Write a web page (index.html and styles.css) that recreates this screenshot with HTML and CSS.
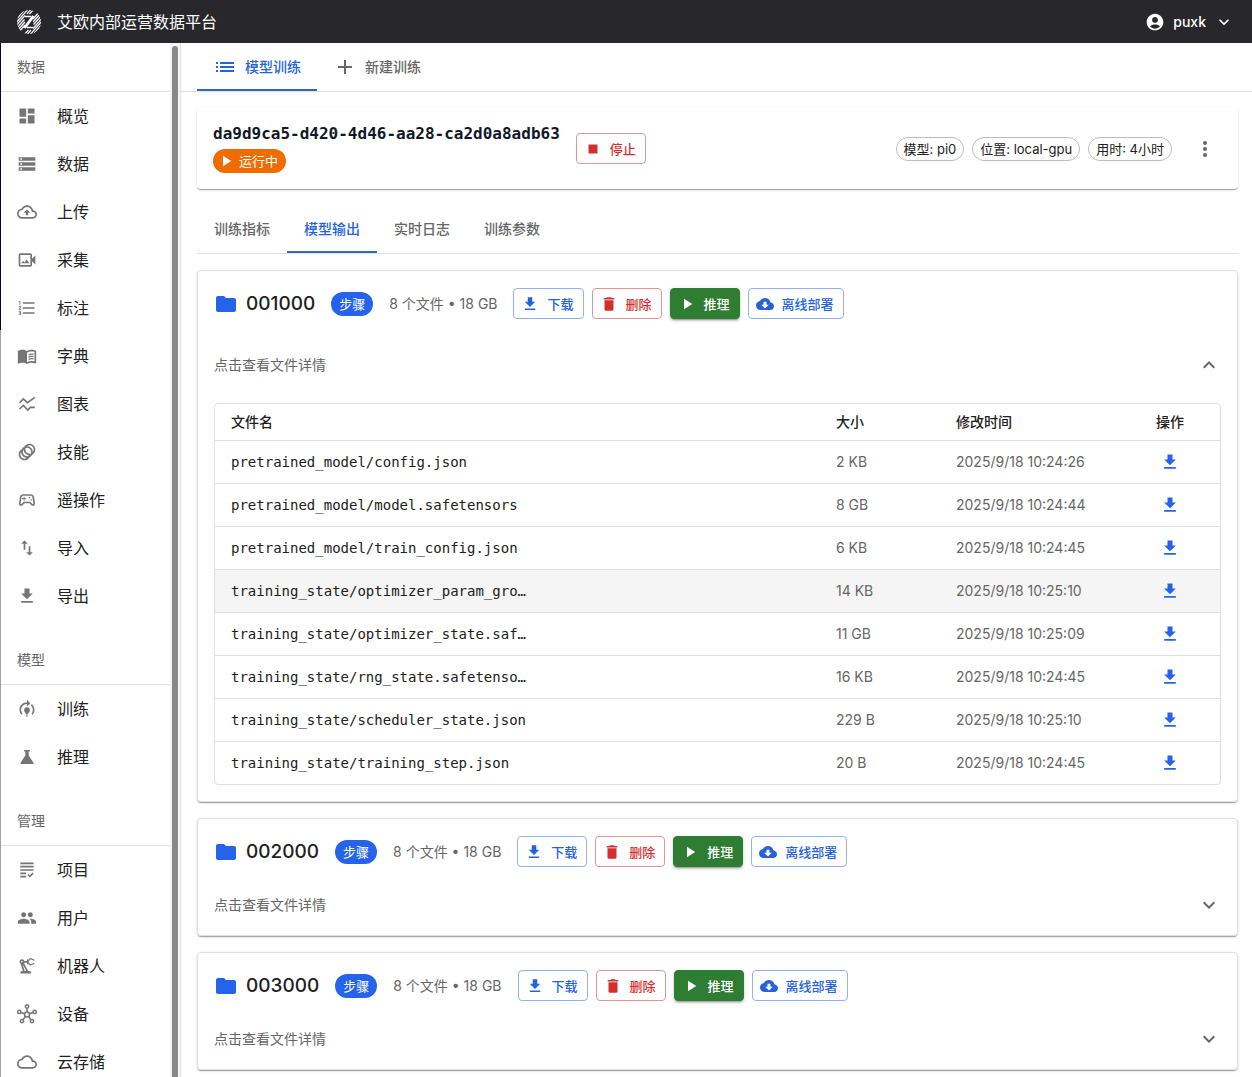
FILE: index.html
```html
<!DOCTYPE html>
<html lang="zh-CN">
  <head>
    <meta charset="UTF-8" />
    <meta name="viewport" content="width=device-width, initial-scale=1.0" />
    <title>艾欧内部运营数据平台</title>
    <link rel="stylesheet" href="styles.css">
  </head>
  <body>
    <svg class="sprite" aria-hidden="true">
      <symbol id="dashboard" viewBox="0 0 24 24"><path d="M3 13h8V3H3v10zm0 8h8v-6H3v6zm10 0h8V11h-8v10zm0-18v6h8V3h-8z" /></symbol>
      <symbol id="storage" viewBox="0 0 24 24"><path d="M2 20h20v-4H2v4zm2-3h2v2H4v-2zM2 4v4h20V4H2zm4 3H4V5h2v2zm-4 7h20v-4H2v4zm2-3h2v2H4v-2z" /></symbol>
      <symbol id="cloud" viewBox="0 0 24 24"><path d="M19.35 10.04C18.67 6.59 15.64 4 12 4 9.11 4 6.6 5.64 5.35 8.04 2.34 8.36 0 10.91 0 14c0 3.31 2.69 6 6 6h13c2.76 0 5-2.24 5-5 0-2.64-2.05-4.78-4.65-4.96zM19 18H6c-2.21 0-4-1.79-4-4 0-2.05 1.53-3.76 3.56-3.97l1.07-.11.5-.95C8.08 7.14 9.94 6 12 6c2.62 0 4.88 1.86 5.39 4.43l.3 1.5 1.53.11c1.56.1 2.78 1.41 2.78 2.96 0 1.65-1.35 3-3 3z" /></symbol>
      <symbol id="upload" viewBox="0 0 24 24"><path d="M19.35 10.04C18.67 6.59 15.64 4 12 4 9.11 4 6.6 5.64 5.35 8.04 2.34 8.36 0 10.91 0 14c0 3.31 2.69 6 6 6h13c2.76 0 5-2.24 5-5 0-2.64-2.05-4.78-4.65-4.96zM19 18H6c-2.21 0-4-1.79-4-4 0-2.05 1.53-3.76 3.56-3.97l1.07-.11.5-.95C8.08 7.14 9.94 6 12 6c2.62 0 4.88 1.86 5.39 4.43l.3 1.5 1.53.11c1.56.1 2.78 1.41 2.78 2.96 0 1.65-1.35 3-3 3zM8 13h2.55v3h2.9v-3H16l-4-4z" /></symbol>
      <symbol id="video" viewBox="0 0 24 24"><path d="M18 10.48V6c0-1.1-.9-2-2-2H4c-1.1 0-2 .9-2 2v12c0 1.1.9 2 2 2h12c1.1 0 2-.9 2-2v-4.48l4 3.98v-11l-4 3.98zM16 18H4V6h12v12zM11.6 11.5 9 15l-1.6-2.2L5 16h10z" /></symbol>
      <symbol id="numbered" viewBox="0 0 24 24"><path d="M2 17h2v.5H3v1h1v.5H2v1h3v-4H2v1zm1-9h1V4H2v1h1v3zm-1 3h1.8L2 13.1v.9h3v-1H3.2L5 10.9V10H2v1zm5-6v2h14V5H7zm0 14h14v-2H7v2zm0-6h14v-2H7v2z" /></symbol>
      <symbol id="book" viewBox="0 0 24 24"><path d="M21 5c-1.11-.35-2.33-.5-3.5-.5-1.95 0-4.05.4-5.5 1.5-1.45-1.1-3.55-1.5-5.5-1.5S2.45 4.9 1 6v14.65c0 .25.25.5.5.5.1 0 .15-.05.25-.05C3.1 20.45 5.05 20 6.5 20c1.95 0 4.05.4 5.5 1.5 1.35-.85 3.8-1.5 5.5-1.5 1.65 0 3.35.3 4.75 1.05.1.05.15.05.25.05.25 0 .5-.25.5-.5V6c-.6-.45-1.25-.75-2-1zm0 13.5c-1.1-.35-2.3-.5-3.5-.5-1.7 0-4.15.65-5.5 1.5V8c1.35-.85 3.8-1.5 5.5-1.5 1.2 0 2.4.15 3.5.5v11.5z" /><path fill="none" stroke="currentColor" stroke-width="1.5" d="M13.9 10.6c1.7-.8 3.9-1 6.1-.5M13.9 13.3c1.7-.8 3.9-1 6.1-.5M13.9 16c1.7-.8 3.9-1 6.1-.5" /></symbol>
      <symbol id="chart" viewBox="0 0 24 24"><path fill="none" stroke="currentColor" stroke-width="2" d="M3 10.6 7.6 6l5 4.4L21.4 4M3 18l4.6-4.400 5.400 5.600 3-3.200h5.400" /></symbol>
      <symbol id="rings" viewBox="0 0 24 24"><path d="M15 2c-2.71 0-5.05 1.54-6.22 3.78-1.28.67-2.34 1.72-3 3C3.54 9.95 2 12.29 2 15c0 3.87 3.13 7 7 7 2.71 0 5.05-1.54 6.22-3.78 1.28-.67 2.34-1.72 3-3C20.46 14.05 22 11.71 22 9c0-3.87-3.13-7-7-7zM9 20c-2.76 0-5-2.24-5-5 0-1.12.37-2.16 1-3 0 3.87 3.13 7 7 7-.84.63-1.88 1-3 1zm3-3c-2.76 0-5-2.24-5-5 0-1.12.37-2.16 1-3 0 3.86 3.13 6.99 7 7-.84.63-1.88 1-3 1zm4.7-3.3c-.53.19-1.1.3-1.7.3-2.76 0-5-2.24-5-5 0-.6.11-1.17.3-1.7.53-.19 1.1-.3 1.7-.3 2.76 0 5 2.24 5 5 0 .6-.11 1.17-.3 1.7zM19 12c0-3.86-3.13-6.99-7-7 .84-.63 1.87-1 3-1 2.76 0 5 2.24 5 5 0 1.12-.37 2.16-1 3z" /></symbol>
      <symbol id="gamepad" viewBox="0 0 24 24"><path d="M21.58 16.09l-1.09-7.66C20.21 6.46 18.52 5 16.53 5H7.47C5.48 5 3.79 6.46 3.51 8.43l-1.09 7.66C2.2 17.63 3.39 19 4.94 19c.68 0 1.32-.27 1.8-.75L9 16h6l2.25 2.25c.48.48 1.13.75 1.8.75 1.56 0 2.75-1.37 2.53-2.91zm-2.1.72c-.08.09-.21.19-.42.19-.15 0-.29-.06-.39-.16L15.83 14H8.17l-2.84 2.84c-.1.1-.24.16-.39.16-.21 0-.34-.1-.42-.19-.08-.09-.16-.23-.13-.44l1.09-7.66C5.63 7.74 6.48 7 7.47 7h9.06c.99 0 1.84.74 1.98 1.72l1.09 7.66c.03.2-.05.34-.12.43zM9 8H8v2H6v1h2v2h1v-2h2v-1H9z" /><circle cx="17" cy="12" r="1" /><circle cx="15" cy="9" r="1" /></symbol>
      <symbol id="swap" viewBox="0 0 24 24"><path d="M16 17.01V10h-2v7.01h-3L15 21l4-3.99h-3zM9 3L5 6.99h3V14h2V6.99h3L9 3z" /></symbol>
      <symbol id="download" viewBox="0 0 24 24"><path d="M5 20h14v-2H5v2zM19 9h-4V3H9v6H5l7 7 7-7z" /></symbol>
      <symbol id="training" viewBox="0 0 24 24"><path d="M15.5 13.5c0 2-2.5 3.5-2.5 5h-2c0-1.5-2.5-3-2.5-5 0-1.93 1.57-3.5 3.5-3.5s3.5 1.57 3.5 3.5zM13 19.5h-2V21h2v-1.5zM19 13c0 1.68-.59 3.21-1.58 4.42l1.42 1.42C20.18 17.27 21 15.23 21 13c0-2.74-1.23-5.19-3.16-6.84l-1.42 1.42C17.99 8.86 19 10.82 19 13zM16 5l-4-4v3c-4.97 0-9 4.03-9 9 0 2.23.82 4.27 2.16 5.84l1.42-1.42C5.59 16.21 5 14.68 5 13c0-3.86 3.14-7 7-7v3l4-4z" /></symbol>
      <symbol id="flask" viewBox="0 0 24 24"><path d="M8.5 3.5h7v2H14v4.8l5.6 8.2c.7 1.1 0 2-1.1 2h-13c-1.1 0-1.8-.9-1.1-2L10 10.3V5.5H8.5z" /></symbol>
      <symbol id="grading" viewBox="0 0 24 24"><path d="M4 7h16v2H4V7zm0 6h16v-2H4v2zm0 4h7v-2H4v2zm0 4h7v-2H4v2zm11.41-2.83L14 16.75l-1.41 1.41L15.41 21 20 16.42 18.58 15l-3.17 3.17zM4 3v2h16V3H4z" /></symbol>
      <symbol id="people" viewBox="0 0 24 24"><path d="M16 11c1.66 0 2.99-1.34 2.99-3S17.66 5 16 5c-1.66 0-3 1.34-3 3s1.34 3 3 3zm-8 0c1.66 0 2.99-1.34 2.99-3S9.66 5 8 5C6.34 5 5 6.34 5 8s1.34 3 3 3zm0 2c-2.33 0-7 1.17-7 3.5V19h14v-2.5c0-2.33-4.67-3.5-7-3.5zm8 0c-.29 0-.62.02-.97.05 1.16.84 1.97 1.97 1.97 3.45V19h6v-2.5c0-2.33-4.67-3.5-7-3.5z" /></symbol>
      <symbol id="robot" viewBox="0 0 24 24"><path d="M19.93 8.35l-3.6 1.68L14 7.7V6.3l2.33-2.33 3.6 1.68c.38.18.82.01 1-.36.18-.38.01-.82-.36-1l-3.92-1.83c-.38-.18-.83-.1-1.13.2L13.78 4.4c-.18-.24-.46-.4-.78-.4-.55 0-1 .45-1 1v1H8.82C8.4 4.84 7.3 4 6 4 4.34 4 3 5.34 3 7c0 1.1.6 2.05 1.48 2.58L7.08 18H6c-1.1 0-2 .9-2 2v1h13v-1c0-1.1-.9-2-2-2h-1.62L8.41 8.77c.17-.24.31-.49.41-.77H12v1c0 .55.45 1 1 1 .32 0 .6-.16.78-.4l1.74 1.74c.3.3.75.38 1.13.2l3.92-1.83c.38-.18.54-.62.36-1-.18-.37-.62-.54-1-.36zM6 8c-.55 0-1-.45-1-1s.45-1 1-1 1 .45 1 1-.45 1-1 1zm5.11 10H9.17l-2.46-8h.1l4.3 8z" /></symbol>
      <symbol id="hub" viewBox="0 0 24 24"><g fill="none" stroke="currentColor" stroke-width="1.8"><circle cx="12" cy="12.5" r="3" /><circle cx="12" cy="3" r="2" /><circle cx="2.8" cy="9.5" r="2" /><circle cx="21.2" cy="9.5" r="2" /><circle cx="6" cy="20.5" r="2" /><circle cx="18" cy="20.5" r="2" /><path d="M12 5v4.500M4.700 10.100l4.400 1.500M19.300 10.100l-4.400 1.500M7.300 18.900l2.900-3.900M16.700 18.900 13.800 15" /></g></symbol>
      <symbol id="list" viewBox="0 0 24 24"><path d="M3 13h2v-2H3v2zm0 4h2v-2H3v2zm0-8h2V7H3v2zm4 4h14v-2H7v2zm0 4h14v-2H7v2zM7 7v2h14V7H7z" /></symbol>
      <symbol id="add" viewBox="0 0 24 24"><path d="M19 13h-6v6h-2v-6H5v-2h6V5h2v6h6v2z" /></symbol>
      <symbol id="play" viewBox="0 0 24 24"><path d="M8 5v14l11-7z" /></symbol>
      <symbol id="stop" viewBox="0 0 24 24"><path d="M6 6h12v12H6z" /></symbol>
      <symbol id="delete" viewBox="0 0 24 24"><path d="M6 19c0 1.1.9 2 2 2h8c1.1 0 2-.9 2-2V7H6v12zM19 4h-3.5l-1-1h-5l-1 1H5v2h14V4z" /></symbol>
      <symbol id="deploy" viewBox="0 0 24 24"><path d="M19.35 10.04C18.67 6.59 15.64 4 12 4 9.11 4 6.6 5.64 5.35 8.04 2.34 8.36 0 10.91 0 14c0 3.31 2.69 6 6 6h13c2.76 0 5-2.24 5-5 0-2.64-2.05-4.78-4.65-4.96zM17 13l-5 5-5-5h3V9h4v4h3z" /></symbol>
      <symbol id="folder" viewBox="0 0 24 24"><path d="M10 4H4c-1.1 0-1.99.9-1.99 2L2 18c0 1.1.9 2 2 2h16c1.1 0 2-.9 2-2V8c0-1.1-.9-2-2-2h-8l-2-2z" /></symbol>
      <symbol id="more" viewBox="0 0 24 24"><circle cx="12" cy="6" r="2" /><circle cx="12" cy="12" r="2" /><circle cx="12" cy="18" r="2" /></symbol>
      <symbol id="expand" viewBox="0 0 24 24"><path d="M16.59 8.59 12 13.17 7.41 8.59 6 10l6 6 6-6z" /></symbol>
      <symbol id="collapse" viewBox="0 0 24 24"><path d="m12 8-6 6 1.41 1.41L12 10.83l4.59 4.58L18 14z" /></symbol>
      <symbol id="account" viewBox="0 0 24 24"><path d="M12 2C6.48 2 2 6.48 2 12s4.48 10 10 10 10-4.48 10-10S17.52 2 12 2zm0 4c1.93 0 3.5 1.57 3.5 3.5S13.93 13 12 13s-3.5-1.57-3.5-3.5S10.07 6 12 6zm0 14c-2.03 0-4.43-.82-6.14-2.88C7.55 15.8 9.68 15 12 15s4.45.8 6.14 2.12C16.43 19.18 14.03 20 12 20z" /></symbol>
    </svg>

    <header class="topbar">
      <svg class="logo" viewBox="0 0 24 24" aria-hidden="true">
        <clipPath id="disc"><circle cx="12" cy="12" r="12" /></clipPath>
        <g clip-path="url(#disc)" fill="none" stroke="#fff">
          <path stroke-width="1.2" d="M-2 8 8-4M-2 11 11-4M-2 14 13-3M-2 17 8 5.500M-1 19 7.500 9.500M0 21 8 12M1 23 8 15M10 4 16-3M12.500 4 19-3" />
          <path stroke-width="1.2" d="M26 16 16 28M26 13 13 28M26 10 11 27M26 7 16 18.500M25 5 16.500 14.500M24 3 16 12M23 1l-7 8M14 20 8 27M11.500 20 5 27" />
          <path stroke-width="2.800" d="M16.500 6 7.500 18" />
          <path stroke-width="1.600" d="M8 6.500h6M10 17.500h6" />
        </g>
      </svg>
      <h1 class="brand">艾欧内部运营数据平台</h1>
      <button class="user" type="button">
        <svg class="icon"><use href="#account" /></svg>
        <span>puxk</span>
        <svg class="icon"><use href="#expand" /></svg>
      </button>
    </header>

    <div class="layout">
      <nav class="sidebar">
        <h2 class="group-title">数据</h2>
        <ul class="group">
          <li><a class="nav-link" href="#"><svg class="icon"><use href="#dashboard" /></svg>概览</a></li>
          <li><a class="nav-link" href="#"><svg class="icon"><use href="#storage" /></svg>数据</a></li>
          <li><a class="nav-link" href="#"><svg class="icon"><use href="#upload" /></svg>上传</a></li>
          <li><a class="nav-link" href="#"><svg class="icon"><use href="#video" /></svg>采集</a></li>
          <li><a class="nav-link" href="#"><svg class="icon"><use href="#numbered" /></svg>标注</a></li>
          <li><a class="nav-link" href="#"><svg class="icon"><use href="#book" /></svg>字典</a></li>
          <li><a class="nav-link" href="#"><svg class="icon"><use href="#chart" /></svg>图表</a></li>
          <li><a class="nav-link" href="#"><svg class="icon"><use href="#rings" /></svg>技能</a></li>
          <li><a class="nav-link" href="#"><svg class="icon"><use href="#gamepad" /></svg>遥操作</a></li>
          <li><a class="nav-link" href="#"><svg class="icon"><use href="#swap" /></svg>导入</a></li>
          <li><a class="nav-link" href="#"><svg class="icon"><use href="#download" /></svg>导出</a></li>
        </ul>
        <h2 class="group-title">模型</h2>
        <ul class="group">
          <li><a class="nav-link" href="#"><svg class="icon"><use href="#training" /></svg>训练</a></li>
          <li><a class="nav-link" href="#"><svg class="icon"><use href="#flask" /></svg>推理</a></li>
        </ul>
        <h2 class="group-title">管理</h2>
        <ul class="group">
          <li><a class="nav-link" href="#"><svg class="icon"><use href="#grading" /></svg>项目</a></li>
          <li><a class="nav-link" href="#"><svg class="icon"><use href="#people" /></svg>用户</a></li>
          <li><a class="nav-link" href="#"><svg class="icon"><use href="#robot" /></svg>机器人</a></li>
          <li><a class="nav-link" href="#"><svg class="icon"><use href="#hub" /></svg>设备</a></li>
          <li><a class="nav-link" href="#"><svg class="icon"><use href="#cloud" /></svg>云存储</a></li>
        </ul>
      </nav>
      <div class="scrollbar"><div class="thumb"></div></div>

      <main class="main">
        <div class="tabs page-tabs" role="tablist">
          <button class="tab active" type="button" role="tab" aria-selected="true"><svg class="icon"><use href="#list" /></svg>模型训练</button>
          <button class="tab" type="button" role="tab"><svg class="icon"><use href="#add" /></svg>新建训练</button>
        </div>

        <div class="content">
          <section class="job">
            <div class="job-info">
              <h2 class="job-id">da9d9ca5-d420-4d46-aa28-ca2d0a8adb63</h2>
              <span class="chip running"><svg class="icon"><use href="#play" /></svg>运行中</span>
            </div>
            <button class="btn danger" type="button"><svg class="icon"><use href="#stop" /></svg>停止</button>
            <div class="job-meta">
              <span class="chip outlined">模型: pi0</span>
              <span class="chip outlined">位置: local-gpu</span>
              <span class="chip outlined">用时: 4小时</span>
            </div>
            <button class="icon-btn" type="button" aria-label="更多"><svg class="icon"><use href="#more" /></svg></button>
          </section>

          <div class="tabs detail-tabs" role="tablist">
            <button class="tab" type="button" role="tab">训练指标</button>
            <button class="tab active" type="button" role="tab" aria-selected="true">模型输出</button>
            <button class="tab" type="button" role="tab">实时日志</button>
            <button class="tab" type="button" role="tab">训练参数</button>
          </div>

          <section class="step">
            <div class="step-head">
              <h3 class="step-name"><svg class="icon"><use href="#folder" /></svg>001000</h3>
              <span class="chip primary">步骤</span>
              <span class="step-size">8 个文件 • 18 GB</span>
              <div class="actions">
                <button class="btn" type="button"><svg class="icon"><use href="#download" /></svg>下载</button>
                <button class="btn danger" type="button"><svg class="icon"><use href="#delete" /></svg>删除</button>
                <button class="btn success" type="button"><svg class="icon"><use href="#play" /></svg>推理</button>
                <button class="btn" type="button"><svg class="icon"><use href="#deploy" /></svg>离线部署</button>
              </div>
            </div>
            <button class="summary expanded" type="button" aria-expanded="true">点击查看文件详情<svg class="icon"><use href="#collapse" /></svg></button>
            <div class="table-wrap">
              <table class="files">
                <thead>
                  <tr><th>文件名</th><th class="col-size">大小</th><th class="col-time">修改时间</th><th class="col-action">操作</th></tr>
                </thead>
                <tbody>
                  <tr>
                    <td><div class="file-name">pretrained_model/config.json</div></td><td>2 KB</td><td>2025/9/18 10:24:26</td>
                    <td class="col-action"><button class="icon-btn small" type="button" aria-label="下载"><svg class="icon"><use href="#download" /></svg></button></td>
                  </tr>
                  <tr>
                    <td><div class="file-name">pretrained_model/model.safetensors</div></td><td>8 GB</td><td>2025/9/18 10:24:44</td>
                    <td class="col-action"><button class="icon-btn small" type="button" aria-label="下载"><svg class="icon"><use href="#download" /></svg></button></td>
                  </tr>
                  <tr>
                    <td><div class="file-name">pretrained_model/train_config.json</div></td><td>6 KB</td><td>2025/9/18 10:24:45</td>
                    <td class="col-action"><button class="icon-btn small" type="button" aria-label="下载"><svg class="icon"><use href="#download" /></svg></button></td>
                  </tr>
                  <tr class="hovered">
                    <td><div class="file-name">training_state/optimizer_param_groups.json</div></td><td>14 KB</td><td>2025/9/18 10:25:10</td>
                    <td class="col-action"><button class="icon-btn small" type="button" aria-label="下载"><svg class="icon"><use href="#download" /></svg></button></td>
                  </tr>
                  <tr>
                    <td><div class="file-name">training_state/optimizer_state.safetensors</div></td><td>11 GB</td><td>2025/9/18 10:25:09</td>
                    <td class="col-action"><button class="icon-btn small" type="button" aria-label="下载"><svg class="icon"><use href="#download" /></svg></button></td>
                  </tr>
                  <tr>
                    <td><div class="file-name">training_state/rng_state.safetensors</div></td><td>16 KB</td><td>2025/9/18 10:24:45</td>
                    <td class="col-action"><button class="icon-btn small" type="button" aria-label="下载"><svg class="icon"><use href="#download" /></svg></button></td>
                  </tr>
                  <tr>
                    <td><div class="file-name">training_state/scheduler_state.json</div></td><td>229 B</td><td>2025/9/18 10:25:10</td>
                    <td class="col-action"><button class="icon-btn small" type="button" aria-label="下载"><svg class="icon"><use href="#download" /></svg></button></td>
                  </tr>
                  <tr>
                    <td><div class="file-name">training_state/training_step.json</div></td><td>20 B</td><td>2025/9/18 10:24:45</td>
                    <td class="col-action"><button class="icon-btn small" type="button" aria-label="下载"><svg class="icon"><use href="#download" /></svg></button></td>
                  </tr>
                </tbody>
              </table>
            </div>
          </section>

          <section class="step">
            <div class="step-head">
              <h3 class="step-name"><svg class="icon"><use href="#folder" /></svg>002000</h3>
              <span class="chip primary">步骤</span>
              <span class="step-size">8 个文件 • 18 GB</span>
              <div class="actions">
                <button class="btn" type="button"><svg class="icon"><use href="#download" /></svg>下载</button>
                <button class="btn danger" type="button"><svg class="icon"><use href="#delete" /></svg>删除</button>
                <button class="btn success" type="button"><svg class="icon"><use href="#play" /></svg>推理</button>
                <button class="btn" type="button"><svg class="icon"><use href="#deploy" /></svg>离线部署</button>
              </div>
            </div>
            <button class="summary" type="button" aria-expanded="false">点击查看文件详情<svg class="icon"><use href="#expand" /></svg></button>
          </section>

          <section class="step">
            <div class="step-head">
              <h3 class="step-name"><svg class="icon"><use href="#folder" /></svg>003000</h3>
              <span class="chip primary">步骤</span>
              <span class="step-size">8 个文件 • 18 GB</span>
              <div class="actions">
                <button class="btn" type="button"><svg class="icon"><use href="#download" /></svg>下载</button>
                <button class="btn danger" type="button"><svg class="icon"><use href="#delete" /></svg>删除</button>
                <button class="btn success" type="button"><svg class="icon"><use href="#play" /></svg>推理</button>
                <button class="btn" type="button"><svg class="icon"><use href="#deploy" /></svg>离线部署</button>
              </div>
            </div>
            <button class="summary" type="button" aria-expanded="false">点击查看文件详情<svg class="icon"><use href="#expand" /></svg></button>
          </section>
        </div>
      </main>
    </div>
  </body>
</html>
```
FILE: styles.css
```css
* {
  box-sizing: border-box;
}

body {
  margin: 0;
  height: 100vh;
  display: flex;
  flex-direction: column;
  overflow: hidden;
  background: #fff;
  color: #212121;
  font-family: Inter, "Noto Sans CJK SC", sans-serif;
  font-size: 14px;
  line-height: 20px;
}

h1,
h2,
h3,
ul {
  margin: 0;
  padding: 0;
  list-style: none;
}

button {
  padding: 0;
  border: 0;
  background: none;
  color: inherit;
  font: inherit;
  cursor: pointer;
}

.sprite {
  display: none;
}

.icon {
  flex: none;
  width: 24px;
  height: 24px;
  fill: currentColor;
}

/* Top bar */
.topbar {
  flex: none;
  height: 43px;
  padding: 0 18px 0 17px;
  display: flex;
  align-items: center;
  background: #28282c;
  color: #fff;
}

.logo {
  width: 24px;
  height: 24px;
  margin-right: 16px;
}

.brand {
  flex: 1;
  font-size: 16px;
  font-weight: 400;
}

.user {
  display: flex;
  align-items: center;
  gap: 8px;
  font-weight: 500;
}

.user .icon {
  width: 20px;
  height: 20px;
}

.layout {
  flex: 1;
  min-height: 0;
  display: flex;
}

/* Sidebar */
.sidebar {
  flex: none;
  width: 170px;
  padding-left: 1px;
  overflow: hidden;
  background: linear-gradient(#0b0630 287px, #a0a0a0 287px) left / 1px 100% no-repeat;
}

.group-title {
  height: 49px;
  padding-left: 16px;
  border-bottom: 1px solid #e0e0e0;
  color: #666;
  font-size: 14px;
  font-weight: 400;
  line-height: 48px;
}

.group {
  margin-bottom: 16px;
}

.nav-link {
  height: 48px;
  padding-left: 16px;
  display: flex;
  align-items: center;
  gap: 20px;
  color: #212121;
  font-size: 16px;
  text-decoration: none;
}

.nav-link .icon {
  width: 20px;
  height: 20px;
  color: #757575;
}

.scrollbar {
  flex: none;
  width: 11px;
  padding: 3px 2px 0;
  display: flex;
  background: #f5f5f5;
  border-right: 1px solid #e0e0e0;
}

.thumb {
  width: 6px;
  border-radius: 3px 3px 0 0;
  background: #888;
}

/* Main area */
.main {
  flex: 1;
  min-width: 0;
  display: flex;
  flex-direction: column;
}

.tabs {
  flex: none;
  display: flex;
  height: 49px;
  border-bottom: 1px solid #e0e0e0;
}

.page-tabs {
  padding-left: 16px;
}

.tab {
  min-width: 90px;
  padding: 2px 16px 0;
  display: flex;
  align-items: center;
  justify-content: center;
  gap: 8px;
  border-bottom: 2px solid transparent;
  color: #666;
  font-weight: 500;
}

.tab.active {
  border-bottom-color: #3069bd;
  color: #2563d9;
}

.content {
  flex: 1;
  min-height: 0;
  padding: 16px 14px 0 16px;
  overflow: hidden;
}

/* Training job card */
.job {
  padding: 16px;
  display: flex;
  align-items: center;
  gap: 16px;
  border-radius: 4px;
  box-shadow: 0 2px 1px -1px rgba(0, 0, 0, 0.2), 0 1px 1px rgba(0, 0, 0, 0.14), 0 1px 3px rgba(0, 0, 0, 0.12);
}

.job-id {
  margin-bottom: 5px;
  color: #111827;
  font-family: "DejaVu Sans Mono", monospace;
  font-size: 16px;
  font-weight: 700;
}

.job-meta {
  margin-left: auto;
  display: flex;
  gap: 8px;
}

.chip {
  flex: none;
  width: fit-content;
  height: 24px;
  padding: 0 8px;
  display: flex;
  align-items: center;
  border-radius: 12px;
  font-size: 13px;
}

.chip.running {
  padding-left: 4px;
  gap: 4px;
  background: #ef6c00;
  color: #fff;
}

.chip.outlined {
  padding: 0 7px;
  border: 1px solid #bdbdbd;
}

.chip.primary {
  background: #2563eb;
  color: #fff;
}

.chip .icon,
.btn .icon {
  width: 18px;
  height: 18px;
}

.btn {
  height: 31px;
  padding: 0 9px 0 7px;
  display: flex;
  align-items: center;
  gap: 8px;
  border: 1px solid #92b1f0;
  border-radius: 4px;
  color: #2563d9;
  font-size: 13px;
  font-weight: 500;
}

.btn.danger {
  border-color: #e29497;
  color: #d32f2f;
}

.btn.success {
  border-color: #2e7d32;
  background: #2e7d32;
  color: #fff;
  box-shadow: 0 3px 1px -2px rgba(0, 0, 0, 0.2), 0 2px 2px rgba(0, 0, 0, 0.14), 0 1px 5px rgba(0, 0, 0, 0.12);
}

.icon-btn {
  padding: 5px;
  display: flex;
  color: #666;
}

.detail-tabs {
  margin: 16px 0;
}

/* Step cards */
.step {
  margin-bottom: 16px;
  padding: 16px 16px 6px;
  border: 1px solid #e0e0e0;
  border-radius: 4px;
  box-shadow: 0 2px 1px -1px rgba(0, 0, 0, 0.2), 0 1px 1px rgba(0, 0, 0, 0.14), 0 1px 3px rgba(0, 0, 0, 0.12);
}

.step-head {
  height: 33px;
  margin-bottom: 13px;
  display: flex;
  align-items: center;
  gap: 16px;
}

.step-name {
  display: flex;
  align-items: center;
  gap: 8px;
  font-size: 19px;
  font-weight: 500;
}

.step-name .icon {
  color: #2563eb;
}

.step-size {
  color: #666;
}

.actions {
  display: flex;
  gap: 8px;
}

.summary {
  width: 100%;
  height: 48px;
  display: flex;
  align-items: center;
  justify-content: space-between;
  color: #666;
}

.summary.expanded {
  height: 64px;
}

.table-wrap {
  margin: 6px 0 10px;
  border: 1px solid #e0e0e0;
  border-radius: 4px;
  overflow: hidden;
}

.files {
  width: 100%;
  border-collapse: collapse;
  table-layout: fixed;
}

.files th,
.files td {
  height: 43px;
  padding: 0 16px;
  border-bottom: 1px solid #e0e0e0;
  color: #666;
  text-align: left;
}

.files th {
  height: 36px;
  color: #212121;
  font-weight: 500;
}

.files tr:last-child td {
  border-bottom: 0;
}

.files .hovered {
  background: #f5f5f5;
}

.files .col-size {
  width: 120px;
}

.files .col-time {
  width: 180px;
}

.files .col-action {
  width: 100px;
  text-align: center;
}

.file-name {
  max-width: 300px;
  overflow: hidden;
  color: #212121;
  font-family: "DejaVu Sans Mono", monospace;
  text-overflow: ellipsis;
  white-space: nowrap;
}

.icon-btn.small {
  margin: 0 auto;
  color: #2563eb;
}

.icon-btn.small .icon {
  width: 20px;
  height: 20px;
}
```
